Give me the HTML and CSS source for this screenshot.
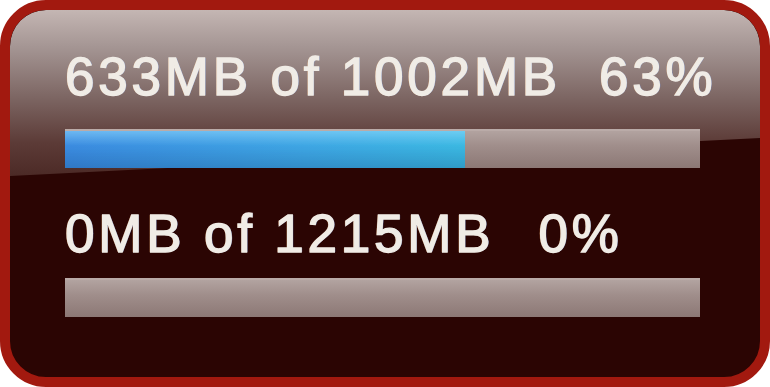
FILE: index.html
```html
<!DOCTYPE html>
<html>
<head>
<meta charset="utf-8">
<link rel="stylesheet" href="styles.css">
</head>
<body>
<div class="widget">
  <div class="gloss"></div>
  <div class="content">
    <div class="label label-first"><span>633MB of 1002MB</span><span>63%</span></div>
    <div class="bar bar-first"><div class="fill" style="width:63%"></div></div>
    <div class="label label-second"><span>0MB of 1215MB</span><span>0%</span></div>
    <div class="bar bar-second"><div class="fill" style="width:0%"></div></div>
  </div>
</div>
</body>
</html>
```
FILE: styles.css
```css
html, body {
  margin: 0;
  padding: 0;
  background: #ffffff;
}
.widget {
  position: relative;
  box-sizing: border-box;
  width: 770px;
  height: 387px;
  border: 10px solid #a2190f;
  border-radius: 46px;
  background: #2b0503;
  overflow: hidden;
}
.gloss {
  position: absolute;
  left: 0;
  top: 0;
  right: 0;
  height: 170px;
  border-radius: 36px 36px 0 0;
  background: linear-gradient(to bottom, #c4b6b3 0%, #a49593 22%, #7c6562 52%, #5c3b37 78%, #4a2824 100%);
  clip-path: polygon(0 0, 100% 0, 100% 128px, 0 166px);
}
.content {
  position: relative;
  padding: 40px 60px 0 55px;
  display: flex;
  flex-direction: column;
  font-family: "Liberation Sans", Arial, sans-serif;
  font-size: 53px;
  line-height: 54px;
  color: #f0ece6;
  letter-spacing: 3.8px;
  -webkit-text-stroke: 1.3px #f0ece6;
}
.label {
  display: flex;
  white-space: nowrap;
  text-shadow: 1px 0 0 rgba(120, 170, 255, 0.5), -1px 0 0 rgba(255, 170, 90, 0.4);
}
.label-first { gap: 38px; }
.bar {
  height: 39px;
  box-sizing: border-box;
  width: 635px;
  background: linear-gradient(to bottom, #b2a3a0 0%, #a08e8b 40%, #8c7875 100%);
  border-top: 2px solid #baaba8;
  display: flex;
}
.fill {
  height: 100%;
  background-image: linear-gradient(to bottom, rgba(150,220,255,0.55) 0%, rgba(255,255,255,0) 40%, rgba(0,40,90,0.2) 100%), linear-gradient(to right, #3b8be0 0%, #3ea6e4 60%, #3bb8e2 100%);
}
.bar-first { margin-top: 25px; }
.label-second { margin-top: 39px; gap: 44px; }
.bar-second { margin-top: 17px; }
```
